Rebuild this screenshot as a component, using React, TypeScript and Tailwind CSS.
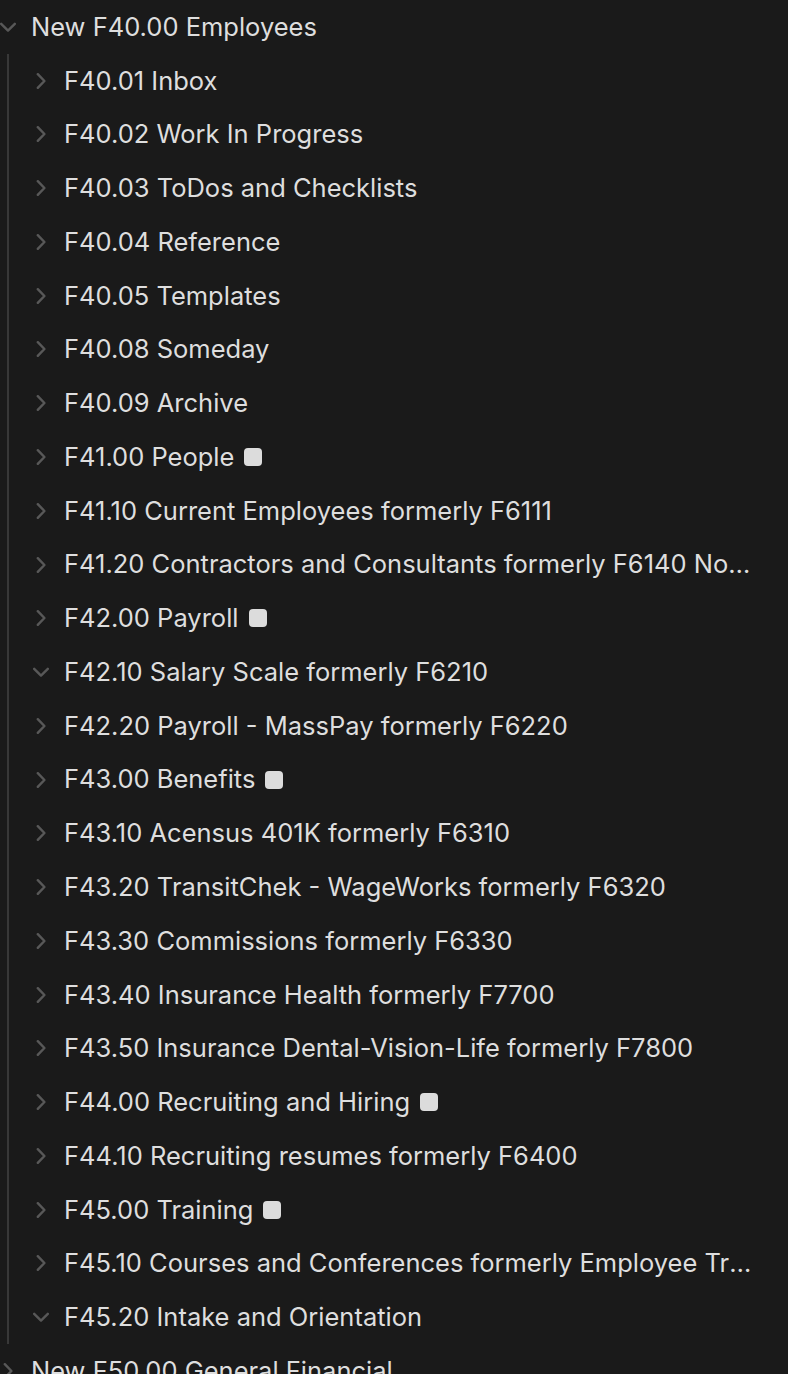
import React from 'react'

type Item = { label: string; open?: boolean; tag?: boolean }

const CHILDREN: Item[] = [
  { label: 'F40.01 Inbox' },
  { label: 'F40.02 Work In Progress' },
  { label: 'F40.03 ToDos and Checklists' },
  { label: 'F40.04 Reference' },
  { label: 'F40.05 Templates' },
  { label: 'F40.08 Someday' },
  { label: 'F40.09 Archive' },
  { label: 'F41.00 People', tag: true },
  { label: 'F41.10 Current Employees formerly F6111' },
  { label: 'F41.20 Contractors and Consultants formerly F6140 Non-Employees' },
  { label: 'F42.00 Payroll', tag: true },
  { label: 'F42.10 Salary Scale formerly F6210', open: true },
  { label: 'F42.20 Payroll - MassPay formerly F6220' },
  { label: 'F43.00 Benefits', tag: true },
  { label: 'F43.10 Acensus 401K formerly F6310' },
  { label: 'F43.20 TransitChek - WageWorks formerly F6320' },
  { label: 'F43.30 Commissions formerly F6330' },
  { label: 'F43.40 Insurance Health formerly F7700' },
  { label: 'F43.50 Insurance Dental-Vision-Life formerly F7800' },
  { label: 'F44.00 Recruiting and Hiring', tag: true },
  { label: 'F44.10 Recruiting resumes formerly F6400' },
  { label: 'F45.00 Training', tag: true },
  { label: 'F45.10 Courses and Conferences formerly Employee Training' },
  { label: 'F45.20 Intake and Orientation', open: true },
]

function Chevron({ open }: { open?: boolean }) {
  return (
    <svg viewBox="0 0 16 16" className="h-4 w-4 shrink-0" fill="none" stroke="#585858" strokeWidth={2.4} strokeLinecap="round" strokeLinejoin="round">
      {open ? <path d="M1.2 4.8l6.8 6.8 6.8-6.8" /> : <path d="M4.8 1.2l6.6 6.8-6.6 6.8" />}
    </svg>
  )
}

function Row({ item }: { item: Item }) {
  return (
    <div className="flex h-[53.78px] items-center gap-[15px] pr-[32px]">
      <Chevron open={item.open} />
      <div className="flex min-w-0 items-center gap-[10px]">
        <span className="truncate">{item.label}</span>
        {item.tag && <span className="h-[18px] w-[18px] shrink-0 rounded-[4px] bg-[#dcdcdc]" />}
      </div>
    </div>
  )
}

export default function App() {
  return (
    <div
      className="h-[1374px] w-[788px] overflow-hidden bg-[#1a1a1a] text-[25.5px] text-[#dedede]"
      style={{ fontFamily: 'Inter, "Noto Sans", sans-serif' }}
    >
      <Row item={{ label: 'New F40.00 Employees', open: true }} />
      {/* tree guide line under the open folder */}
      <div className="ml-[7px] border-l-2 border-[#383838] pl-[24px]">
        {CHILDREN.map((c) => (
          <Row key={c.label} item={c} />
        ))}
      </div>
      <Row item={{ label: 'New F50.00 General Financial' }} />
    </div>
  )
}
